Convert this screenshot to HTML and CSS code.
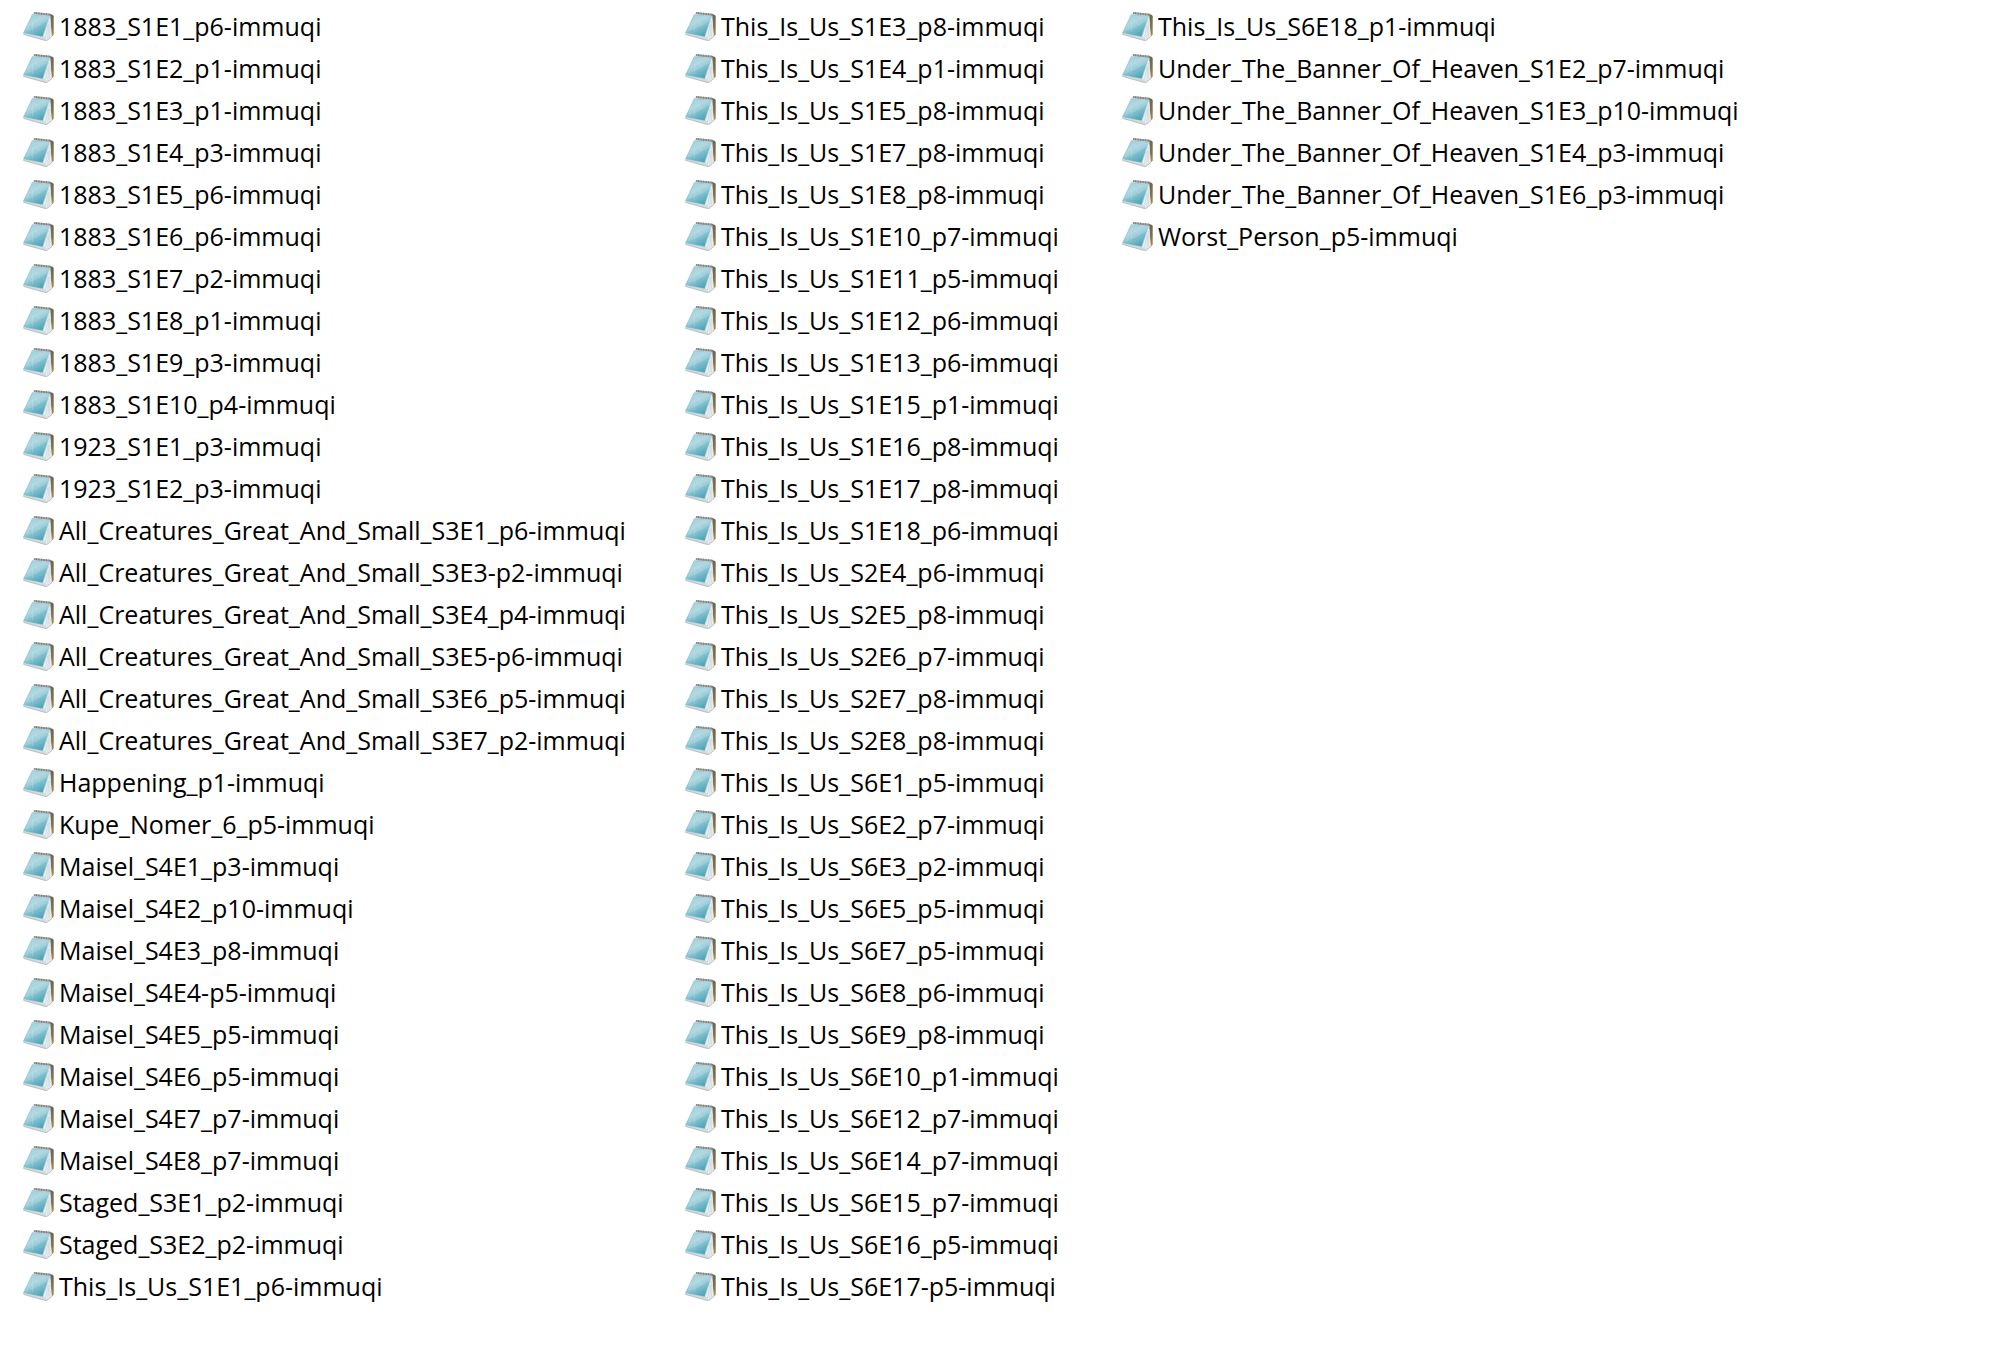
FILE: index.html
```html
<!DOCTYPE html>
<html lang="en">
<head>
<meta charset="utf-8">
<title>Files</title>
<link rel="stylesheet" href="styles.css">
</head>
<body>
<svg class="sprite" aria-hidden="true">
  <defs>
    <linearGradient id="cover" x1="0.1" y1="0" x2="0.7" y2="1">
      <stop offset="0" stop-color="#92c6d4"/>
      <stop offset="0.4" stop-color="#a3d2dd"/>
      <stop offset="0.7" stop-color="#74b9c8"/>
      <stop offset="1" stop-color="#469fb5"/>
    </linearGradient>
    <linearGradient id="back" x1="0" y1="0" x2="0" y2="1">
      <stop offset="0" stop-color="#6b6453"/>
      <stop offset="0.6" stop-color="#86724c"/>
      <stop offset="1" stop-color="#bd8f42"/>
    </linearGradient>
    <symbol id="notepad" viewBox="36 36 96 90">
      <path d="M119 44l10 4 2 4v55l-8 8z" fill="url(#back)"/>
      <path d="M39 103L98 110 121 48 125 112 110 125 103 124 40 106z" fill="#d3dbdf"/>
      <path d="M120 54L125 112 111 122 101 112z" fill="#edf2f5"/>
      <path d="M118 66L113 120M114 78L106 119M120 76L119 115" stroke="#c3ced6" stroke-width="2" fill="none"/>
      <path d="M40 106L104 124 110 125 125 113" stroke="#a0a8ac" stroke-width="2" fill="none"/>
      <path d="M66 46L120 50 98 113 39 103z" fill="url(#cover)"/>
      <path d="M67 49L119 53 112 67 76 87 46 98z" fill="#fff" opacity=".14"/>
      <path d="M70 57L90 78M67 66L68 99" stroke="#fff" stroke-width="1" opacity=".45"/>
      <path d="M39 103L98 113 120 52" fill="none" stroke="#cfe7ed" stroke-width="1"/>
      <path d="M72 39L121 44 120 51 70 46z" fill="#b9bdbc"/>
      <path d="M73 42L121 47" stroke="#747978" stroke-width="6" stroke-dasharray="3 2"/>
    </symbol>
  </defs>
</svg>
<main>
<ul class="files">
<li class="file"><svg class="icon"><use href="#notepad"/></svg>1883_S1E1_p6-immuqi</li>
<li class="file"><svg class="icon"><use href="#notepad"/></svg>1883_S1E2_p1-immuqi</li>
<li class="file"><svg class="icon"><use href="#notepad"/></svg>1883_S1E3_p1-immuqi</li>
<li class="file"><svg class="icon"><use href="#notepad"/></svg>1883_S1E4_p3-immuqi</li>
<li class="file"><svg class="icon"><use href="#notepad"/></svg>1883_S1E5_p6-immuqi</li>
<li class="file"><svg class="icon"><use href="#notepad"/></svg>1883_S1E6_p6-immuqi</li>
<li class="file"><svg class="icon"><use href="#notepad"/></svg>1883_S1E7_p2-immuqi</li>
<li class="file"><svg class="icon"><use href="#notepad"/></svg>1883_S1E8_p1-immuqi</li>
<li class="file"><svg class="icon"><use href="#notepad"/></svg>1883_S1E9_p3-immuqi</li>
<li class="file"><svg class="icon"><use href="#notepad"/></svg>1883_S1E10_p4-immuqi</li>
<li class="file"><svg class="icon"><use href="#notepad"/></svg>1923_S1E1_p3-immuqi</li>
<li class="file"><svg class="icon"><use href="#notepad"/></svg>1923_S1E2_p3-immuqi</li>
<li class="file"><svg class="icon"><use href="#notepad"/></svg>All_Creatures_Great_And_Small_S3E1_p6-immuqi</li>
<li class="file"><svg class="icon"><use href="#notepad"/></svg>All_Creatures_Great_And_Small_S3E3-p2-immuqi</li>
<li class="file"><svg class="icon"><use href="#notepad"/></svg>All_Creatures_Great_And_Small_S3E4_p4-immuqi</li>
<li class="file"><svg class="icon"><use href="#notepad"/></svg>All_Creatures_Great_And_Small_S3E5-p6-immuqi</li>
<li class="file"><svg class="icon"><use href="#notepad"/></svg>All_Creatures_Great_And_Small_S3E6_p5-immuqi</li>
<li class="file"><svg class="icon"><use href="#notepad"/></svg>All_Creatures_Great_And_Small_S3E7_p2-immuqi</li>
<li class="file"><svg class="icon"><use href="#notepad"/></svg>Happening_p1-immuqi</li>
<li class="file"><svg class="icon"><use href="#notepad"/></svg>Kupe_Nomer_6_p5-immuqi</li>
<li class="file"><svg class="icon"><use href="#notepad"/></svg>Maisel_S4E1_p3-immuqi</li>
<li class="file"><svg class="icon"><use href="#notepad"/></svg>Maisel_S4E2_p10-immuqi</li>
<li class="file"><svg class="icon"><use href="#notepad"/></svg>Maisel_S4E3_p8-immuqi</li>
<li class="file"><svg class="icon"><use href="#notepad"/></svg>Maisel_S4E4-p5-immuqi</li>
<li class="file"><svg class="icon"><use href="#notepad"/></svg>Maisel_S4E5_p5-immuqi</li>
<li class="file"><svg class="icon"><use href="#notepad"/></svg>Maisel_S4E6_p5-immuqi</li>
<li class="file"><svg class="icon"><use href="#notepad"/></svg>Maisel_S4E7_p7-immuqi</li>
<li class="file"><svg class="icon"><use href="#notepad"/></svg>Maisel_S4E8_p7-immuqi</li>
<li class="file"><svg class="icon"><use href="#notepad"/></svg>Staged_S3E1_p2-immuqi</li>
<li class="file"><svg class="icon"><use href="#notepad"/></svg>Staged_S3E2_p2-immuqi</li>
<li class="file"><svg class="icon"><use href="#notepad"/></svg>This_Is_Us_S1E1_p6-immuqi</li>
<li class="file"><svg class="icon"><use href="#notepad"/></svg>This_Is_Us_S1E3_p8-immuqi</li>
<li class="file"><svg class="icon"><use href="#notepad"/></svg>This_Is_Us_S1E4_p1-immuqi</li>
<li class="file"><svg class="icon"><use href="#notepad"/></svg>This_Is_Us_S1E5_p8-immuqi</li>
<li class="file"><svg class="icon"><use href="#notepad"/></svg>This_Is_Us_S1E7_p8-immuqi</li>
<li class="file"><svg class="icon"><use href="#notepad"/></svg>This_Is_Us_S1E8_p8-immuqi</li>
<li class="file"><svg class="icon"><use href="#notepad"/></svg>This_Is_Us_S1E10_p7-immuqi</li>
<li class="file"><svg class="icon"><use href="#notepad"/></svg>This_Is_Us_S1E11_p5-immuqi</li>
<li class="file"><svg class="icon"><use href="#notepad"/></svg>This_Is_Us_S1E12_p6-immuqi</li>
<li class="file"><svg class="icon"><use href="#notepad"/></svg>This_Is_Us_S1E13_p6-immuqi</li>
<li class="file"><svg class="icon"><use href="#notepad"/></svg>This_Is_Us_S1E15_p1-immuqi</li>
<li class="file"><svg class="icon"><use href="#notepad"/></svg>This_Is_Us_S1E16_p8-immuqi</li>
<li class="file"><svg class="icon"><use href="#notepad"/></svg>This_Is_Us_S1E17_p8-immuqi</li>
<li class="file"><svg class="icon"><use href="#notepad"/></svg>This_Is_Us_S1E18_p6-immuqi</li>
<li class="file"><svg class="icon"><use href="#notepad"/></svg>This_Is_Us_S2E4_p6-immuqi</li>
<li class="file"><svg class="icon"><use href="#notepad"/></svg>This_Is_Us_S2E5_p8-immuqi</li>
<li class="file"><svg class="icon"><use href="#notepad"/></svg>This_Is_Us_S2E6_p7-immuqi</li>
<li class="file"><svg class="icon"><use href="#notepad"/></svg>This_Is_Us_S2E7_p8-immuqi</li>
<li class="file"><svg class="icon"><use href="#notepad"/></svg>This_Is_Us_S2E8_p8-immuqi</li>
<li class="file"><svg class="icon"><use href="#notepad"/></svg>This_Is_Us_S6E1_p5-immuqi</li>
<li class="file"><svg class="icon"><use href="#notepad"/></svg>This_Is_Us_S6E2_p7-immuqi</li>
<li class="file"><svg class="icon"><use href="#notepad"/></svg>This_Is_Us_S6E3_p2-immuqi</li>
<li class="file"><svg class="icon"><use href="#notepad"/></svg>This_Is_Us_S6E5_p5-immuqi</li>
<li class="file"><svg class="icon"><use href="#notepad"/></svg>This_Is_Us_S6E7_p5-immuqi</li>
<li class="file"><svg class="icon"><use href="#notepad"/></svg>This_Is_Us_S6E8_p6-immuqi</li>
<li class="file"><svg class="icon"><use href="#notepad"/></svg>This_Is_Us_S6E9_p8-immuqi</li>
<li class="file"><svg class="icon"><use href="#notepad"/></svg>This_Is_Us_S6E10_p1-immuqi</li>
<li class="file"><svg class="icon"><use href="#notepad"/></svg>This_Is_Us_S6E12_p7-immuqi</li>
<li class="file"><svg class="icon"><use href="#notepad"/></svg>This_Is_Us_S6E14_p7-immuqi</li>
<li class="file"><svg class="icon"><use href="#notepad"/></svg>This_Is_Us_S6E15_p7-immuqi</li>
<li class="file"><svg class="icon"><use href="#notepad"/></svg>This_Is_Us_S6E16_p5-immuqi</li>
<li class="file"><svg class="icon"><use href="#notepad"/></svg>This_Is_Us_S6E17-p5-immuqi</li>
<li class="file"><svg class="icon"><use href="#notepad"/></svg>This_Is_Us_S6E18_p1-immuqi</li>
<li class="file"><svg class="icon"><use href="#notepad"/></svg>Under_The_Banner_Of_Heaven_S1E2_p7-immuqi</li>
<li class="file"><svg class="icon"><use href="#notepad"/></svg>Under_The_Banner_Of_Heaven_S1E3_p10-immuqi</li>
<li class="file"><svg class="icon"><use href="#notepad"/></svg>Under_The_Banner_Of_Heaven_S1E4_p3-immuqi</li>
<li class="file"><svg class="icon"><use href="#notepad"/></svg>Under_The_Banner_Of_Heaven_S1E6_p3-immuqi</li>
<li class="file"><svg class="icon"><use href="#notepad"/></svg>Worst_Person_p5-immuqi</li>
</ul>
</main>
</body>
</html>
```
FILE: styles.css
```css
body {
  margin: 0;
  background: #fff;
  color: #000;
  font: 25px/42px "Open Sans", "Noto Sans", sans-serif;
}

.sprite {
  display: block;
  width: 0;
  height: 0;
}

.files {
  display: grid;
  grid-auto-flow: column;
  grid-template-rows: repeat(31, 42px);
  grid-template-columns: 662px 437px 1fr;
  margin: 0;
  padding: 5px 0 0 22px;
  list-style: none;
}

.file {
  display: flex;
  align-items: center;
  gap: 5px;
  white-space: nowrap;
}

.icon {
  flex: none;
  width: 32px;
  height: 30px;
}
```
